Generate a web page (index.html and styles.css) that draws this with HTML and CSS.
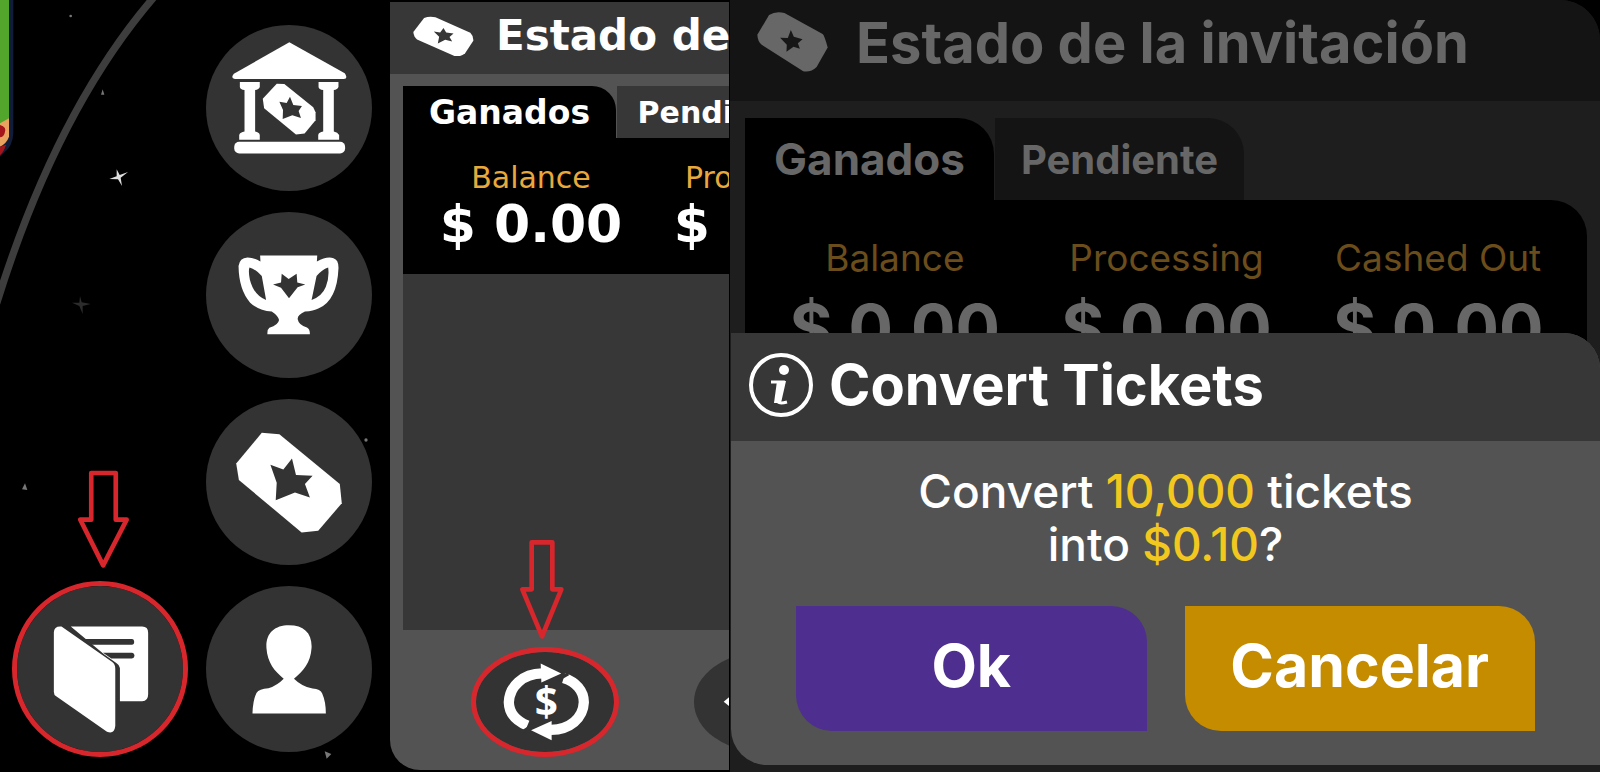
FILE: index.html
```html
<!DOCTYPE html>
<html lang="es">
<head>
<meta charset="utf-8">
<meta name="viewport" content="width=device-width, initial-scale=1">
<title>Convert Tickets</title>
<link rel="stylesheet" href="styles.css">
</head>
<body>
<main class="board">
  <section class="menu" aria-label="Menu">
    <svg class="sky" viewBox="0 0 1170 2316" preserveAspectRatio="xMinYMin slice" aria-hidden="true">
      <path d="M0 0H40V400Q38 440 12 458L0 470Z" fill="#101c38"/>
      <path d="M0 0H27V390L0 400Z" fill="#52a62c"/>
      <path d="M0 370L27 355V410Q20 430 0 440Z" fill="#e9a25f"/>
      <path d="M0 375Q22 380 14 400Q10 412 0 412ZM0 440L18 434Q12 455 0 466Z" fill="#a3151b"/>
      <path d="M463 -10Q170 330 -10 910" fill="none" stroke="#3d3d3d" stroke-width="22"/>
      <path d="M328 537L350 529L350 508L359 525L384 516L362 533L366 558L354 538Z" fill="#ddd"/>
      <path d="M216 908L238 908L240 888L245 907L272 912L248 918L248 942L238 918Z" fill="#2c2c2c"/>
      <g fill="#777"><circle cx="212" cy="48" r="4"/><path d="M303 284L308 268L313 284Z"/><path d="M66 1468L75 1450L82 1470Z"/><circle cx="1098" cy="1320" r="5"/><path d="M974 2254L994 2262L980 2276Z"/></g>
    </svg>
    <button class="round bank" aria-label="Bank">
      <svg viewBox="617 75 500 500" aria-hidden="true" fill="#fff">
        <path d="M868 127L1035 220Q1046 237 1032 238H704Q690 236 701 222Z"/>
        <path d="M719 247H779V262Q776 270 765 271V396Q777 398 779 406V421H717V406Q720 398 733 396V271Q720 270 719 262ZM956 247H1016V262Q1013 270 1002 271V396Q1014 398 1018 406V421H955V406Q957 398 970 396V271Q957 270 956 262Z"/>
        <rect x="702" y="427" width="334" height="35" rx="15"/>
        <path d="M830 252L853 253L940 323L947 338V362L914 402L888 405L792 326L788 297Z"/>
        <path fill="#333" d="M870 291L880 316L906 319L896 334L903 355L877 347L848 358L849 331L838 306L860 310Z"/>
      </svg>
    </button>
    <button class="round trophy" aria-label="Trophy">
      <svg viewBox="617 635 500 500" aria-hidden="true" fill="#fff">
        <path fill-rule="evenodd" d="M780 766H952L951 784Q980 768 1001 774Q1017 779 1016 805Q1012 900 957 925Q940 934 915 935Q893 945 893 957Q896 975 921 983Q930 987 930 1003H802Q801 989 808 984Q835 975 837 960Q833 947 815 935Q775 932 750 908Q716 870 715 798Q718 773 742 772Q762 772 781 784ZM748 802Q744 813 749 838Q761 886 798 900L785 828Q765 806 748 802ZM985 802Q966 808 950 828L935 900Q967 888 978 860Q989 833 985 802Z"/>
        <path fill="#333" d="M845 821L866 837L890 821L892 847L916 853L893 862L867 895L843 863L819 853L843 847Z"/>
      </svg>
    </button>
    <button class="round ticket" aria-label="Tickets">
      <svg viewBox="617 36 500 500" aria-hidden="true" fill="#fff">
        <path d="M785 138L838 142L1020 292L1026 350L955 433L905 438L716 280L708 230Z"/>
        <path fill="#333" d="M876 215L888 265L938 267L915 292L930 333L885 318L827 341L830 288L811 234L850 248Z"/>
      </svg>
    </button>
    <button class="round wallet" aria-label="Wallet">
      <svg viewBox="51 596 500 500" aria-hidden="true" fill="#fff">
        <path d="M162 735Q163 716 185 718L338 825Q347 832 347 845V1018Q344 1044 322 1035L169 928Q162 924 162 915Z"/>
        <path d="M213 718H428Q446 718 446 737V922Q446 943 428 943H361V843Q360 834 350 828L314 802Z"/>
        <path fill="#333" d="M254 756H398Q404 756 404 764Q404 773 397 773H277ZM310 797H398Q405 799 405 806Q404 814 397 814H335Z"/>
      </svg>
      <span class="ring"></span>
    </button>
    <button class="round person" aria-label="Profile">
      <svg viewBox="617 596 500 500" aria-hidden="true" fill="#fff">
        <path d="M867 714C912 714 937 738 935 782C932 828 910 852 882 875Q905 898 938 905Q962 906 967 920Q978 945 978 980H757Q758 940 769 918Q777 906 805 904Q832 895 851 875C824 853 802 828 799 782C797 738 823 714 867 714Z"/>
      </svg>
    </button>
    <svg class="pointer pointer-wallet" viewBox="230 252 160 298" aria-hidden="true"><path d="M273 261H347V402H380L309 540L240 402H273Z"/></svg>
  </section>

  <section class="status" aria-label="Estado">
    <header class="status-head">
      <svg class="status-icon" viewBox="83 50 182 122" aria-hidden="true" fill="#fff">
        <path d="M84 98L116 56Q132 50 150 54L254 100Q264 110 263 124L238 162Q222 174 205 169L95 120Q85 112 84 98Z"/>
        <path fill="#373737" d="M174 86L182 99L204 102L192 113L200 126L179 121L157 132L161 112L145 96L164 99Z"/>
      </svg>
      <h2>Estado de la invitación</h2>
    </header>
    <div class="status-body">
      <div class="tabs"><button class="tab active">Ganados</button><button class="tab">Pendiente</button></div>
      <dl class="totals">
        <div><dt>Balance</dt><dd>$ 0.00</dd></div>
        <div><dt>Processing</dt><dd>$ 0.00</dd></div>
      </dl>
      <div class="list"></div>
    </div>
    <footer class="actions">
      <button class="oval" aria-label="Convert">
        <svg viewBox="257 382 446 330" aria-hidden="true">
          <g fill="none" stroke="#fff" stroke-width="31">
            <path d="M427 618Q372 595 371 548C373 500 412 462 472 461"/>
            <path d="M536 475C573 486 597 513 597 548C595 596 555 630 498 631"/>
          </g>
          <path fill="#fff" d="M467 431L529 461L469 488ZM500 604L438 632L500 662Z"/>
          <path fill="none" stroke="#333" stroke-width="10" d="M412 637L450 613M518 480L550 462"/>
          <text x="484" y="589" text-anchor="middle" class="dollar">$</text>
        </svg>
        <span class="ring"></span>
      </button>
      <button class="oval back" aria-label="Back">
        <svg viewBox="0 0 444 330" aria-hidden="true"><path fill="#fff" d="M104 164L136 138V190Z"/></svg>
      </button>
    </footer>
    <svg class="pointer pointer-convert" viewBox="402 56 138 304" aria-hidden="true"><path d="M440 66H502V207H529L471 348L412 207H440Z"/></svg>
  </section>

  <section class="convert" aria-label="Convertir">
    <div class="dimmed">
      <header class="dim-head">
        <svg class="dim-icon" viewBox="94 44 212 180" aria-hidden="true" fill="#676767">
          <path d="M95 112L130 53Q150 40 176 47L290 110Q296 116 305 150L272 208Q255 225 232 221L108 142Q96 132 95 112Z"/>
          <path fill="#171717" d="M195 98L204 118L230 125L216 137L222 154L203 148L182 163L183 142L163 121L186 122Z"/>
        </svg>
        <h1>Estado de la invitación</h1>
      </header>
      <div class="dim-body">
        <div class="tabs"><button class="tab active">Ganados</button><button class="tab">Pendiente</button></div>
        <dl class="totals">
          <div><dt>Balance</dt><dd>$ 0.00</dd></div>
          <div><dt>Processing</dt><dd>$ 0.00</dd></div>
          <div><dt>Cashed Out</dt><dd>$ 0.00</dd></div>
        </dl>
      </div>
    </div>
    <div class="dialog" role="dialog" aria-labelledby="dialog-title">
      <header class="dialog-head">
        <svg class="info" viewBox="0 0 64 64" aria-hidden="true">
          <circle cx="32" cy="32" r="30" fill="none" stroke="#fff" stroke-width="4"/>
          <circle cx="35" cy="17" r="5" fill="#fff"/>
          <path d="M22 29H34L29 49Q31 51 38 49" fill="none" stroke="#fff" stroke-width="3"/>
          <path d="M28 28H37L32 50H25Z" fill="#fff"/>
        </svg>
        <h2 id="dialog-title">Convert Tickets</h2>
      </header>
      <div class="dialog-body">
        <p>Convert <b>10,000</b> tickets<br>into <b>$0.10</b>?</p>
        <div class="choices"><button class="ok">Ok</button><button class="cancel">Cancelar</button></div>
      </div>
    </div>
  </section>
</main>
</body>
</html>
```

FILE: styles.css
```css
* { box-sizing: border-box; }

body {
  margin: 0;
  background: #000;
  color: #fff;
  font-family: Inter, "Open Sans", sans-serif;
}

h1, h2, p, dl, dd { margin: 0; }

button {
  border: 0;
  padding: 0;
  color: inherit;
  font: inherit;
  cursor: pointer;
}

svg { display: block; }

.board {
  display: grid;
  grid-template-columns: 390fr 339fr 871fr;
  min-height: 100vh;
}

/* Round menu */
.menu {
  position: relative;
  display: grid;
  grid-template-columns: 166px 166px;
  grid-auto-rows: 166px;
  gap: 21px 23px;
  padding: 25px 0 0 17px;
  overflow: hidden;
}

.sky {
  position: absolute;
  inset: 0;
  width: 100%;
  height: 100%;
}

.round {
  position: relative;
  grid-column: 2;
  border-radius: 50%;
  background: #333;
}

.round svg { width: 100%; }
.wallet { grid-column: 1; grid-row: 4; }
.person { grid-row: 4; }

.ring {
  position: absolute;
  inset: -5px;
  border: 5px solid #d8262d;
  border-radius: 50%;
}

.pointer {
  position: absolute;
  fill: none;
  stroke: #d8262d;
  stroke-width: 14;
  stroke-linejoin: round;
}

.pointer-wallet { left: 77px; top: 470px; width: 53px; }
.pointer-convert { left: 129px; top: 537px; width: 46px; }

/* Status panel */
.status {
  position: relative;
  display: flex;
  flex-direction: column;
  margin: 2px 0;
  overflow: hidden;
  border-bottom-left-radius: 30px;
  background: #535353;
  white-space: nowrap;
  font-family: "DejaVu Sans", sans-serif;
}

.status-head {
  display: flex;
  align-items: center;
  gap: 22px;
  height: 72px;
  padding: 0 0 4px 23px;
  background: #373737;
}

.status-icon { flex: none; width: 61px; }
.status-head h2 { font-size: 42px; line-height: 48px; }

.status-body {
  display: flex;
  flex: 1;
  flex-direction: column;
  padding: 12px 0 0 13px;
}

.tabs { display: flex; }

.tab {
  flex: none;
  border-radius: 0 24px 0 0;
  font-weight: 700;
}

.status .tabs { height: 52px; gap: 1px; }
.status .tab { width: 213px; background: #373737; font-size: 30px; }
.status .tab.active { background: #000; font-size: 33px; }

.totals { display: grid; background: #000; text-align: center; }

.status .totals {
  grid-template-columns: repeat(2, 234px);
  height: 136px;
  padding: 24px 0 0 11px;
}

.status dt { color: #e9a83c; font-size: 30px; line-height: 32px; }
.status dd { font-size: 52px; font-weight: 700; line-height: 60px; }
.list { flex: 1; background: #373737; }

.actions {
  display: flex;
  gap: 80px;
  height: 140px;
  padding: 22px 0 0 86px;
}

.oval {
  position: relative;
  flex: none;
  width: 138px;
  height: 100px;
  border-radius: 50%;
  background: #333;
}

.oval svg { position: absolute; inset: -5px; width: 148px; height: 110px; }
.dollar { fill: #fff; font: 700 122px "Open Sans", sans-serif; }

/* Conversion panel */
.convert {
  position: relative;
  overflow: hidden;
  border-left: 1px solid #000;
  background: #000;
  white-space: nowrap;
}

.dimmed {
  height: 100%;
  border-top-right-radius: 40px;
  overflow: hidden;
  background: #1e1e1e;
  color: #676767;
}

.dim-head {
  display: flex;
  align-items: center;
  gap: 28px;
  height: 101px;
  padding: 0 0 16px 27px;
  background: #141414;
}

.dim-icon { flex: none; width: 71px; }
.dim-head h1 { font-size: 56px; line-height: 64px; }
.dim-body { padding: 17px 13px 0 15px; }
.dimmed .tabs { height: 82px; gap: 1px; }

.dimmed .tab {
  width: 249px;
  border-top-right-radius: 36px;
  background: #141414;
  font-size: 40px;
}

.dimmed .tab.active { background: #000; font-size: 44px; }

.dimmed .totals {
  grid-template-columns: repeat(3, 1fr);
  height: 500px;
  padding: 36px 13px 0 14px;
  border-top-right-radius: 36px;
}

.dimmed dt { color: #6b4d1c; font-size: 37px; line-height: 44px; }
.dimmed dd { font-size: 66px; font-weight: 700; line-height: 96px; }

/* Confirmation dialog */
.dialog {
  position: absolute;
  right: 0;
  bottom: 7px;
  left: 1px;
  overflow: hidden;
  border-radius: 0 36px 0 36px;
  background: #535353;
}

.dialog-head {
  display: flex;
  align-items: center;
  gap: 16px;
  height: 108px;
  padding: 0 0 4px 18px;
  background: #373737;
}

.info { flex: none; width: 64px; }
.dialog-head h2 { font-size: 56px; line-height: 64px; }

.dialog-body { padding: 24px 65px 34px; }

.dialog-body p {
  font-size: 46px;
  font-weight: 500;
  line-height: 53px;
  text-align: center;
}

.dialog-body b { color: #f2c81f; font-weight: 500; }

.choices {
  display: grid;
  grid-template-columns: 1fr 1fr;
  gap: 38px;
  margin-top: 35px;
}

.choices button {
  height: 125px;
  padding-bottom: 6px;
  border-radius: 0 36px;
  font-size: 59px;
  font-weight: 700;
}

.ok { background: #4e2e8f; }
.cancel { background: #c58c00; }
```
